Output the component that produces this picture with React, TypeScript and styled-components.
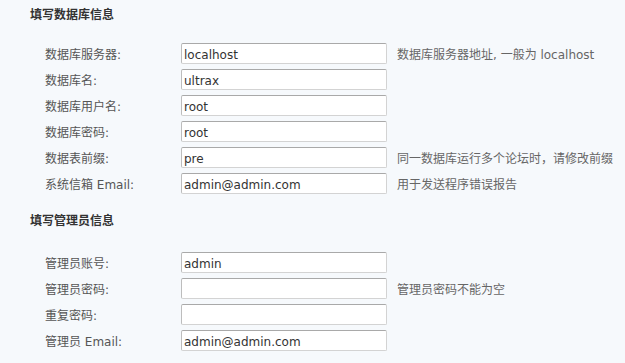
import React from 'react';
import styled, { createGlobalStyle } from 'styled-components';

const GlobalStyle = createGlobalStyle`
  html, body {
    margin: 0;
    padding: 0;
    background: #f6f9fc;
  }
  body {
    font-family: "DejaVu Sans", "Noto Sans CJK SC", sans-serif;
    font-size: 12px;
    color: #555;
  }
`;

const Page = styled.div`
  width: 625px;
  height: 363px;
  padding: 5px 0 0 30px;
  box-sizing: border-box;
  overflow: hidden;
`;

const Section = styled.div<{ $top?: number }>`
  margin-top: ${props => props.$top ?? 0}px;
`;

const Heading = styled.div<{ $gap: number }>`
  height: 20px;
  line-height: 20px;
  font-weight: bold;
  color: #333;
  margin-bottom: ${props => props.$gap}px;
`;

const Row = styled.div`
  display: grid;
  grid-template-columns: 126px 206px auto;
  column-gap: 10px;
  align-items: center;
  height: 26px;
  padding-left: 15px;
`;

const Label = styled.label`
  color: #555;
  white-space: nowrap;
`;

const Input = styled.input`
  box-sizing: border-box;
  width: 206px;
  height: 21px;
  margin: 0;
  padding: 4px 2px 0;
  border: 1px solid #d3d3d3;
  border-top-color: #a9a9a9;
  border-left-color: #bdbdbd;
  border-radius: 2px;
  background: #fff;
  font-family: "DejaVu Sans", "Noto Sans CJK SC", sans-serif;
  font-size: 12px;
  color: #333;
  outline: none;
`;

const Hint = styled.span`
  color: #666;
  white-space: nowrap;
`;

interface Field {
  label: string;
  value: string;
  hint?: string;
  type?: string;
}

const dbFields: Field[] = [
  { label: '数据库服务器:', value: 'localhost', hint: '数据库服务器地址, 一般为 localhost' },
  { label: '数据库名:', value: 'ultrax' },
  { label: '数据库用户名:', value: 'root' },
  { label: '数据库密码:', value: 'root' },
  { label: '数据表前缀:', value: 'pre', hint: '同一数据库运行多个论坛时，请修改前缀' },
  { label: '系统信箱 Email:', value: 'admin@admin.com', hint: '用于发送程序错误报告' },
];

const adminFields: Field[] = [
  { label: '管理员账号:', value: 'admin' },
  { label: '管理员密码:', value: '', hint: '管理员密码不能为空', type: 'password' },
  { label: '重复密码:', value: '', type: 'password' },
  { label: '管理员 Email:', value: 'admin@admin.com' },
];

const FieldRow: React.FC<{ field: Field }> = ({ field }) => (
  <Row>
    <Label>{field.label}</Label>
    <Input type={field.type || 'text'} defaultValue={field.value} />
    {field.hint ? <Hint>{field.hint}</Hint> : <span />}
  </Row>
);

const App: React.FC = () => {
  return (
    <>
      <GlobalStyle />
      <Page>
        <Section>
          <Heading $gap={15}>填写数据库信息</Heading>
          {dbFields.map((f) => (
            <FieldRow key={f.label} field={f} />
          ))}
        </Section>
        <Section $top={15}>
          <Heading $gap={18}>填写管理员信息</Heading>
          {adminFields.map((f) => (
            <FieldRow key={f.label} field={f} />
          ))}
        </Section>
      </Page>
    </>
  );
};

export default App;
